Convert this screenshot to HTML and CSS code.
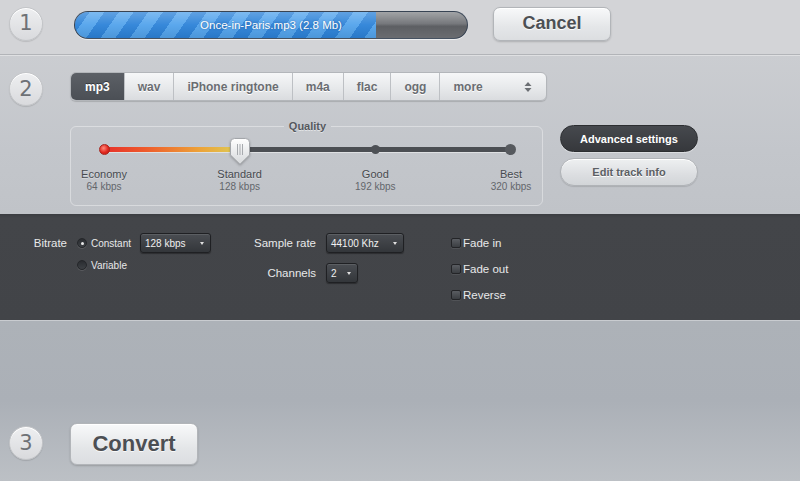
FILE: index.html
```html
<!DOCTYPE html>
<html>
<head>
<meta charset="utf-8">
<link rel="stylesheet" href="styles.css">
</head>
<body>
<div class="app">
  <section class="step step1">
    <div class="num">1</div>
    <div class="progress">
      <div class="fill" style="width:301px"></div>
      <div class="ptext">Once-in-Paris.mp3 (2.8 Mb)</div>
    </div>
    <button class="btn cancel">Cancel</button>
  </section>

  <section class="step step2">
    <div class="num">2</div>
    <div class="step2-body">
      <div class="tabs">
        <div class="tab active">mp3</div>
        <div class="tab">wav</div>
        <div class="tab">iPhone ringtone</div>
        <div class="tab">m4a</div>
        <div class="tab">flac</div>
        <div class="tab">ogg</div>
        <div class="tab more">more
          <svg class="updown" width="8" height="12" viewBox="0 0 8 12"><path d="M4 1 L7.5 5 H0.5 Z M4 11 L7.5 7 H0.5 Z" fill="#6c6f74"/></svg>
        </div>
      </div>
      <div class="quality-row">
        <fieldset class="quality">
          <legend>Quality</legend>
          <div class="stops">
            <div class="stop">
              <div class="knob"><span class="dot red"></span></div>
              <div class="sname">Economy</div>
              <div class="skbps">64 kbps</div>
            </div>
            <div class="stop">
              <div class="knob">
                <svg class="thumb" width="20" height="27" viewBox="0 0 20 27"><defs><linearGradient id="kg" x1="0" y1="0" x2="0" y2="1"><stop offset="0" stop-color="#ffffff"/><stop offset="1" stop-color="#d6d8db"/></linearGradient></defs><path d="M4.5 0.5 H15.5 Q19.5 0.5 19.5 4.5 V17 L10 26.3 L0.5 17 V4.5 Q0.5 0.5 4.5 0.5Z" fill="url(#kg)" stroke="#a3a6aa"/><path d="M7.5 6 V17 M10 6 V17 M12.5 6 V17" stroke="#a7aaae" stroke-width="1"/></svg>
              </div>
              <div class="sname">Standard</div>
              <div class="skbps">128 kbps</div>
            </div>
            <div class="stop">
              <div class="knob"><span class="dot good"></span></div>
              <div class="sname">Good</div>
              <div class="skbps">192 kbps</div>
            </div>
            <div class="stop">
              <div class="knob"><span class="dot best"></span></div>
              <div class="sname">Best</div>
              <div class="skbps">320 kbps</div>
            </div>
          </div>
        </fieldset>
        <div class="side-btns">
          <button class="pill dark">Advanced settings</button>
          <button class="pill light">Edit track info</button>
        </div>
      </div>
    </div>
  </section>

  <section class="advanced">
    <div class="grp bitrate">
      <div class="lbl blabel">Bitrate</div>
      <div class="radios">
        <div class="radio on"><span class="rb"></span>Constant</div>
        <div class="radio"><span class="rb"></span>Variable</div>
      </div>
      <div class="sel w-bitrate">128 kbps<span class="caret"></span></div>
    </div>
    <div class="grp audio">
      <div class="lbl">Sample rate</div>
      <div class="sel w-rate">44100 Khz<span class="caret"></span></div>
      <div class="lbl">Channels</div>
      <div class="sel w-ch">2<span class="caret"></span></div>
    </div>
    <div class="grp checks">
      <div class="check"><span class="cb"></span>Fade in</div>
      <div class="check"><span class="cb"></span>Fade out</div>
      <div class="check"><span class="cb"></span>Reverse</div>
    </div>
  </section>

  <section class="step step3">
    <div class="num">3</div>
    <button class="btn convert">Convert</button>
  </section>
</div>
</body>
</html>
```

FILE: styles.css
```css
* { box-sizing: border-box; }
html, body {
  margin: 0;
  padding: 0;
  background: #bcc0c5;
}
body {
  font-family: "Liberation Sans", Arial, sans-serif;
  width: 800px;
  height: 481px;
  overflow: hidden;
}
.app {
  width: 800px;
  height: 481px;
  display: flex;
  flex-direction: column;
}

.step {
  display: flex;
  padding-left: 9px;
}

.num {
  width: 34px;
  height: 34px;
  flex: none;
  border-radius: 50%;
  background: linear-gradient(#eeeff1, #d9dadd);
  border: 1px solid #c3c5c8;
  box-shadow: 0 1px 1px rgba(0, 0, 0, 0.12), inset 0 1px 0 #fff;
  color: #6e7176;
  font-family: "DejaVu Sans", sans-serif;
  font-size: 21px;
  display: flex;
  align-items: center;
  justify-content: center;
  line-height: 1;
}

/* Row 1 */
.step1 {
  height: 55px;
  padding-bottom: 7px;
  align-items: center;
  background: #d3d4d7;
  border-bottom: 1px solid #b2b4b8;
}
.step1 .num { margin-right: 31px; }

.progress {
  width: 394px;
  height: 28px;
  margin-top: 2px;
  border-radius: 14px;
  border: 1px solid rgba(40, 55, 75, 0.75);
  background: linear-gradient(#a2a4a7, #76787c 45%, #5d5f63 55%, #6a6c70);
  overflow: hidden;
  display: grid;
  box-shadow: 0 1px 0 rgba(255, 255, 255, 0.6);
}
.fill {
  grid-area: 1 / 1;
  justify-self: start;
  height: 100%;
  background:
    linear-gradient(rgba(255, 255, 255, 0.25), rgba(255, 255, 255, 0.05) 50%, rgba(0, 0, 0, 0.08)),
    repeating-linear-gradient(125deg, #2c82d8 0 12px, #52a3ec 12px 24px);
}
.ptext {
  grid-area: 1 / 1;
  place-self: center;
  color: #ffffff;
  font-size: 11.5px;
  text-shadow: 0 0 2px rgba(20, 60, 110, 0.6);
}

.btn {
  font-family: "Liberation Sans", Arial, sans-serif;
  font-weight: bold;
  color: #4c4f54;
  border: 1px solid #b2b5b9;
  border-radius: 7px;
  background: linear-gradient(#f8f9fa, #e4e6e8 60%, #dcdee1);
  box-shadow: 0 1px 2px rgba(0, 0, 0, 0.18), inset 0 1px 0 #fff;
  padding: 0;
  text-shadow: 0 1px 0 rgba(255, 255, 255, 0.8);
}
.cancel {
  width: 118px;
  height: 34px;
  margin-left: 25px;
  font-size: 18px;
}

/* Row 2 */
.step2 {
  height: 159px;
  padding-top: 17px;
  align-items: flex-start;
  background: linear-gradient(#cbcdd1, #c3c6cb 60%, #c0c3c8);
  box-shadow: inset 0 1px 0 #dfe0e2;
}
.step2 .num { margin-right: 27px; }

.step2-body {
  display: flex;
  flex-direction: column;
}

.tabs {
  display: flex;
  height: 29px;
  width: 477px;
  border: 1px solid #b3b6ba;
  border-radius: 6px;
  overflow: hidden;
  background: linear-gradient(#f6f7f8, #e7e9eb 55%, #dadcdf);
  box-shadow: 0 1px 1px rgba(0, 0, 0, 0.15);
}
.tab {
  display: flex;
  align-items: center;
  padding: 0 13px;
  font-size: 12px;
  font-weight: bold;
  color: #6a6d72;
  border-left: 1px solid #bdc0c4;
  text-shadow: 0 1px 0 #fff;
}
.tab:first-child { border-left: none; }
.tab.active {
  background: linear-gradient(#5c6066, #4b4f55);
  color: #ffffff;
  text-shadow: 0 -1px 0 rgba(0, 0, 0, 0.4);
  padding: 0 14px;
}
.tab.more {
  flex: 1;
  justify-content: space-between;
  padding-right: 14px;
}
.updown { display: block; }

.quality-row {
  display: flex;
  align-items: flex-start;
  margin-top: 19px;
}

.quality {
  margin: 0;
  width: 473px;
  min-width: 0;
  padding: 3px 1px 12px 3px;
  border: 1px solid rgba(255, 255, 255, 0.38);
  border-radius: 6px;
}
.quality legend {
  margin: 0 auto;
  padding: 0 5px;
  font-size: 11px;
  line-height: 13px;
  font-weight: bold;
  color: #55585d;
  text-shadow: 0 1px 0 rgba(255, 255, 255, 0.5);
}

.stops {
  position: relative;
  width: 467px;
  display: flex;
  justify-content: space-between;
}
.stops::before {
  content: "";
  position: absolute;
  left: 30px;
  right: 30px;
  top: 11px;
  height: 5px;
  border-radius: 3px;
  background: #4b4e53;
  box-shadow: 0 1px 0 rgba(255, 255, 255, 0.45);
}
.stops::after {
  content: "";
  position: absolute;
  left: 30px;
  width: 136px;
  top: 11px;
  height: 5px;
  border-radius: 3px;
  background: linear-gradient(90deg, #e6302a, #ee5a2c 30%, #eda238 70%, #dccd58);
}
.stop {
  position: relative;
  z-index: 1;
  width: 60px;
  display: flex;
  flex-direction: column;
  align-items: center;
}
.knob {
  height: 26px;
  width: 100%;
  display: flex;
  align-items: center;
  justify-content: center;
}
.thumb {
  display: block;
  margin-top: 5px;
  filter: drop-shadow(0 1px 1px rgba(0, 0, 0, 0.25));
}
.dot {
  display: block;
  border-radius: 50%;
}
.dot.red {
  width: 11px;
  height: 11px;
  background: radial-gradient(circle at 40% 35%, #ff8a7c, #e2281f 55%, #b91b15);
  border: 1px solid #a8241d;
}
.dot.good {
  width: 9px;
  height: 9px;
  background: #4d5055;
}
.dot.best {
  width: 11px;
  height: 11px;
  background: #56595e;
}
.sname {
  margin-top: 6px;
  font-size: 11px;
  line-height: 13px;
  color: #474a4f;
  white-space: nowrap;
  text-shadow: 0 1px 0 rgba(255, 255, 255, 0.35);
}
.skbps {
  font-size: 10px;
  line-height: 12px;
  color: #63666b;
  white-space: nowrap;
}

.side-btns {
  margin-left: 17px;
  margin-top: 5px;
  display: flex;
  flex-direction: column;
  gap: 6px;
}
.pill {
  width: 138px;
  height: 27px;
  border-radius: 14px;
  font-family: "Liberation Sans", Arial, sans-serif;
  font-size: 11px;
  font-weight: bold;
  padding: 0;
}
.pill.dark {
  background: linear-gradient(#46494e, #36383c);
  border: 1px solid #2c2e31;
  color: #ffffff;
  box-shadow: 0 1px 0 rgba(255, 255, 255, 0.4);
}
.pill.light {
  height: 28px;
  background: linear-gradient(#eef0f1, #dcdee1 60%, #d2d5d8);
  border: 1px solid #b0b3b7;
  color: #5c5f64;
  box-shadow: 0 1px 1px rgba(0, 0, 0, 0.12), inset 0 1px 0 #fff;
  text-shadow: 0 1px 0 #fff;
}

/* Advanced panel */
.advanced {
  height: 107px;
  padding-top: 19px;
  display: flex;
  align-items: flex-start;
  background: linear-gradient(#3b3d41, #434549 4px, #424448);
  border-bottom: 1px solid #c9ccd0;
  color: #e8e9ea;
}
.grp { display: flex; }
.lbl {
  font-size: 11.5px;
  line-height: 20px;
  white-space: nowrap;
}
.blabel {
  width: 67px;
  text-align: right;
  margin-right: 10px;
}
.radios {
  width: 63px;
  display: flex;
  flex-direction: column;
  gap: 2px;
}
.radio {
  height: 20px;
  display: flex;
  align-items: center;
  gap: 4px;
  font-size: 10px;
  white-space: nowrap;
}
.rb {
  width: 10px;
  height: 10px;
  border-radius: 50%;
  background: linear-gradient(#2a2c30, #3e4145);
  border: 1px solid #25272a;
  box-shadow: 0 1px 0 rgba(255, 255, 255, 0.12);
  display: flex;
  align-items: center;
  justify-content: center;
}
.radio.on .rb::after {
  content: "";
  width: 3px;
  height: 3px;
  border-radius: 50%;
  background: #e8e8e8;
}
.sel {
  height: 20px;
  display: flex;
  align-items: center;
  justify-content: space-between;
  padding: 0 6px 0 4px;
  font-size: 10px;
  color: #f0f0f0;
  border: 1px solid #1f2023;
  border-radius: 3px;
  background: linear-gradient(#4a4d52, #33363a);
  box-shadow: 0 1px 1px rgba(0, 0, 0, 0.35), inset 0 1px 0 rgba(255, 255, 255, 0.1);
}
.caret {
  width: 0;
  height: 0;
  border-left: 2.5px solid transparent;
  border-right: 2.5px solid transparent;
  border-top: 3px solid #e0e0e0;
}
.w-bitrate { width: 71px; }
.w-rate { width: 78px; }
.w-ch { width: 32px; }

.audio {
  margin-left: 43px;
  display: grid;
  grid-template-columns: 62px auto;
  column-gap: 10px;
  row-gap: 10px;
  justify-items: start;
}
.audio .lbl {
  justify-self: end;
}

.checks {
  margin-left: 47px;
  flex-direction: column;
  gap: 6px;
}
.check {
  height: 20px;
  display: flex;
  align-items: center;
  gap: 2px;
  font-size: 11.5px;
  white-space: nowrap;
}
.cb {
  width: 10px;
  height: 10px;
  border-radius: 2px;
  border: 1px solid #232427;
  background: linear-gradient(#5a5d62, #3b3e42);
  box-shadow: 0 1px 0 rgba(255, 255, 255, 0.08);
}

/* Row 3 */
.step3 {
  flex: 1;
  padding-top: 102px;
  align-items: flex-start;
  background: linear-gradient(#adb2b8, #abb0b7 50%, #bcc0c5);
}
.step3 .num { margin-top: 3px; margin-right: 27px; }
.convert {
  width: 128px;
  height: 42px;
  font-size: 22px;
}
```
